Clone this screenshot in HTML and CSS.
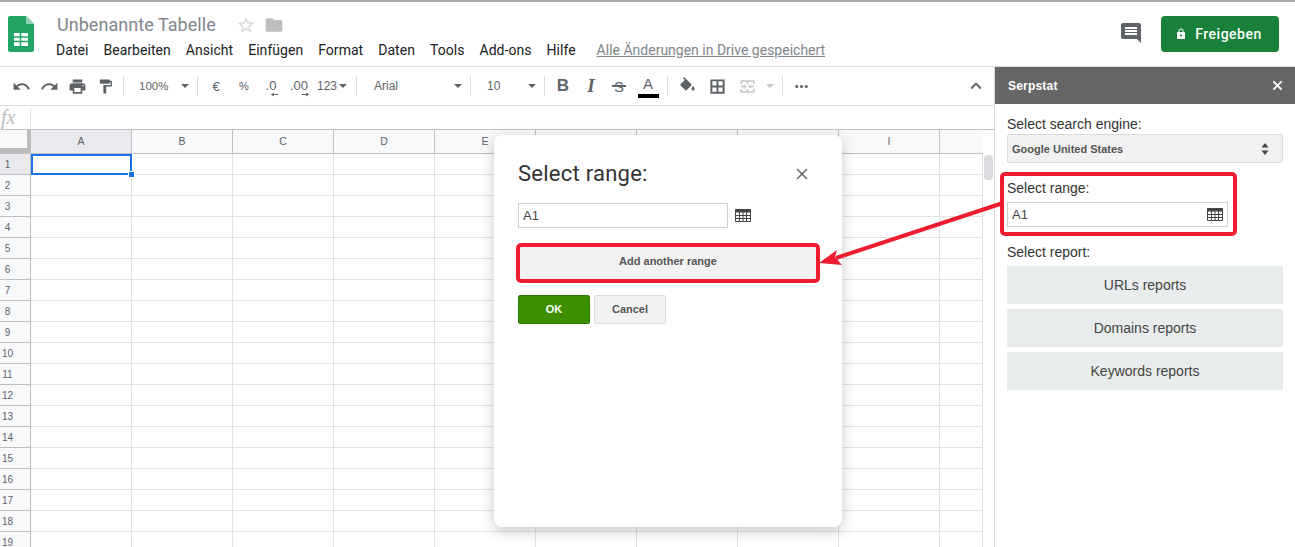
FILE: index.html
```html
<!DOCTYPE html>
<html lang="de">
<head>
<meta charset="utf-8">
<title>Unbenannte Tabelle</title>
<link rel="stylesheet" href="styles.css">
</head>
<body>
<svg class="defs" width="0" height="0">
  <symbol id="table" viewBox="0 0 16 13"><path d="M.5.5h15v12H.5z" fill="none" stroke="#444" stroke-width="1"/><path d="M.5.5h15v3H.5z" fill="#444"/><path d="M4.500 3v10M8 3v10M11.500 3v10M0 6.500h16M0 9.500h16" stroke="#444" stroke-width="1" fill="none"/></symbol>
</svg>
<div class="app">
  <header class="top">
    <svg class="logo" viewBox="0 0 26 36"><path d="M2 0h16l8 8v26a2 2 0 0 1-2 2H2a2 2 0 0 1-2-2V2a2 2 0 0 1 2-2z" fill="#23a566"/><path d="M18 0l8 8h-8z" fill="#8ed1b1"/><path d="M6 17h14v13H6z" fill="#fff"/><path d="M6 21h14M6 25.500h14M12.500 17v13" stroke="#23a566" stroke-width="1.500"/></svg>
    <div class="titles">
      <div class="title-row">
        <span class="doc-title">Unbenannte Tabelle</span>
        <svg class="star" viewBox="0 0 24 24"><path d="M22 9.240l-7.190-.62L12 2 9.190 8.630 2 9.240l5.460 4.730L5.820 21 12 17.270 18.180 21l-1.630-7.030L22 9.240zM12 15.400l-3.760 2.270 1-4.280-3.320-2.880 4.380-.38L12 6.100l1.710 4.040 4.380.38-3.320 2.880 1 4.280L12 15.400z"/></svg>
        <svg class="folder" viewBox="0 0 24 24"><path d="M10 4H4c-1.100 0-2 .9-2 2v12c0 1.100.9 2 2 2h16c1.100 0 2-.9 2-2V8c0-1.100-.9-2-2-2h-8l-2-2z"/></svg>
      </div>
      <nav class="menu">
        <span>Datei</span><span>Bearbeiten</span><span>Ansicht</span><span>Einfügen</span><span>Format</span><span>Daten</span><span>Tools</span><span>Add-ons</span><span>Hilfe</span>
        <a class="saved">Alle Änderungen in Drive gespeichert</a>
      </nav>
    </div>
    <svg class="comment" viewBox="0 0 24 24"><path d="M21.990 4c0-1.100-.89-2-1.990-2H4c-1.100 0-2 .9-2 2v12c0 1.100.9 2 2 2h14l4 4-.01-18zM18 14H6v-2h12v2zm0-3H6V9h12v2zm0-3H6V6h12v2z"/></svg>
    <button class="share"><svg viewBox="0 0 24 24"><path d="M18 8h-1V6c0-2.760-2.240-5-5-5S7 3.240 7 6v2H6c-1.100 0-2 .9-2 2v10c0 1.100.9 2 2 2h12c1.100 0 2-.9 2-2V10c0-1.100-.9-2-2-2zm-6 9c-1.100 0-2-.9-2-2s.9-2 2-2 2 .9 2 2-.9 2-2 2zm3.100-9H8.900V6c0-1.710 1.390-3.100 3.100-3.100 1.710 0 3.100 1.390 3.100 3.100v2z"/></svg>Freigeben</button>
  </header>
  <div class="main">
    <div class="work">
      <div class="toolbar">
        <span class="tb"><svg viewBox="0 0 24 24"><path d="M12.500 8c-2.650 0-5.050.99-6.900 2.600L2 7v9h9l-3.620-3.620c1.390-1.160 3.160-1.880 5.120-1.880 3.540 0 6.550 2.310 7.600 5.500l2.370-.78C21.080 11.030 17.150 8 12.500 8z"/></svg></span>
        <span class="tb"><svg viewBox="0 0 24 24"><path d="M18.400 10.600C16.550 8.990 14.150 8 11.500 8c-4.650 0-8.580 3.030-9.960 7.220L3.900 16c1.050-3.190 4.050-5.500 7.600-5.500 1.950 0 3.730.72 5.120 1.880L13 16h9V7l-3.600 3.600z"/></svg></span>
        <span class="tb"><svg viewBox="0 0 24 24"><path d="M19 8H5c-1.660 0-3 1.340-3 3v6h4v4h12v-4h4v-6c0-1.660-1.340-3-3-3zm-3 11H8v-5h8v5zm3-7c-.55 0-1-.45-1-1s.45-1 1-1 1 .45 1 1-.45 1-1 1zm-1-9H6v4h12V3z"/></svg></span>
        <span class="tb paint"><svg viewBox="0 0 24 24"><path d="M18 4V3c0-.55-.45-1-1-1H5c-.55 0-1 .45-1 1v4c0 .55.45 1 1 1h12c.55 0 1-.45 1-1V6h1v4H9v11c0 .55.45 1 1 1h2c.55 0 1-.45 1-1v-9h8V4h-3z"/></svg></span>
        <i class="sep"></i>
        <span class="pick w-zoom">100%<b class="caret"></b></span>
        <i class="sep"></i>
        <span class="tb txt">€</span>
        <span class="tb txt small">%</span>
        <span class="dec w-dec0">.0<svg viewBox="0 0 10 5"><path d="M0 2.500L3.500 0v2H9v1H3.500v2z"/></svg></span>
        <span class="dec w-dec2">.00<svg class="right" viewBox="0 0 10 5"><path d="M10 2.500L6.500 0v2H1v1h5.500v2z"/></svg></span>
        <span class="pick w-num">123<b class="caret"></b></span>
        <i class="sep"></i>
        <span class="pick w-font">Arial<b class="caret"></b></span>
        <i class="sep"></i>
        <span class="pick w-size">10<b class="caret"></b></span>
        <i class="sep"></i>
        <span class="tb fmt bold">B</span>
        <span class="tb fmt ital">I</span>
        <span class="tb fmt strike">S</span>
        <span class="tb w30 fmt color">A</span>
        <i class="sep"></i>
        <span class="tb w30"><svg viewBox="0 0 24 24"><path d="M16.560 8.940L7.620 0 6.210 1.410l2.380 2.380-5.150 5.150c-.59.59-.59 1.540 0 2.120l5.500 5.500c.29.29.68.44 1.060.44s.77-.15 1.060-.44l5.500-5.500c.59-.58.59-1.530 0-2.120zM19 11.500s-2 2.170-2 3.500c0 1.100.9 2 2 2s2-.9 2-2c0-1.330-2-3.500-2-3.500z"/></svg></span>
        <span class="tb w30"><svg viewBox="0 0 24 24"><path d="M3 3v18h18V3H3zm7.750 15.500H5.500v-5.250h5.250v5.250zm0-7.750H5.500V5.500h5.250v5.250zm7.750 7.750h-5.250v-5.250h5.250v5.250zm0-7.750h-5.250V5.500h5.250v5.250z"/></svg></span>
        <span class="tb w30 off"><svg viewBox="0 0 24 24"><path d="M3 4h18v2H3zM3 18h18v2H3zM3 6h2v3H3zM19 6h2v3h-2zM3 15h2v3H3zM19 15h2v3h-2zM11 4h2v5h-2zM11 15h2v5h-2zM4 11h4V9l3 3-3 3v-2H4zM20 11h-4V9l-3 3 3 3v-2h4z"/></svg></span>
        <span class="w-mcaret"><b class="caret off"></b></span>
        <i class="sep"></i>
        <span class="tb"><svg viewBox="0 0 24 24"><circle cx="6" cy="12" r="2"/><circle cx="12" cy="12" r="2"/><circle cx="18" cy="12" r="2"/></svg></span>
        <span class="tb collapse"><svg viewBox="0 0 24 24"><path d="M12 8l-6 6 1.410 1.410L12 10.830l4.590 4.580L18 14z"/></svg></span>
      </div>
      <div class="formula"><span class="fx">fx</span><i class="fsep"></i></div>
      <div class="sheet">
        <div class="heads">
          <div class="corner"></div>
          <div class="col active">A</div><div class="col">B</div><div class="col">C</div><div class="col">D</div><div class="col">E</div><div class="col">F</div><div class="col">G</div><div class="col">H</div><div class="col">I</div><div class="col last"></div>
        </div>
        <div class="body">
          <div class="rows">
            <div class="active">1</div><div>2</div><div>3</div><div>4</div><div>5</div><div>6</div><div>7</div><div>8</div><div>9</div><div>10</div><div>11</div><div>12</div><div>13</div><div>14</div><div>15</div><div>16</div><div>17</div><div>18</div><div>19</div>
          </div>
          <div class="cells"><div class="cursor"><i></i></div></div>
          <div class="vscroll"><i></i></div>
        </div>
      </div>
    </div>
    <aside class="panel">
      <div class="panel-head"><strong>Serpstat</strong><svg viewBox="0 0 12 12"><path d="M1.500 1.500l9 9M10.500 1.500l-9 9"/></svg></div>
      <div class="panel-body">
        <label class="lab">Select search engine:</label>
        <div class="select">Google United States<svg viewBox="0 0 8 12"><path d="M4 0l3.500 4.500h-7zM4 12L.5 7.500h7z"/></svg></div>
        <label class="lab lab-range">Select range:</label>
        <div class="range"><span>A1</span><svg><use href="#table"/></svg></div>
        <label class="lab lab-report">Select report:</label>
        <div class="reports"><div>URLs reports</div><div>Domains reports</div><div>Keywords reports</div></div>
      </div>
    </aside>
  </div>
  <section class="dialog">
    <div class="dlg-head"><h2>Select range:</h2><svg viewBox="0 0 12 12"><path d="M1 1l10 10M11 1L1 11"/></svg></div>
    <div class="dlg-input"><div class="field">A1</div><svg><use href="#table"/></svg></div>
    <button class="add">Add another range</button>
    <div class="actions"><button class="ok">OK</button><button class="cancel">Cancel</button></div>
  </section>
  <svg class="notes" viewBox="0 0 1295 547">
    <rect x="518" y="245" width="300" height="36" rx="3"/>
    <rect x="1002" y="174" width="233" height="60" rx="3"/>
    <path class="line" d="M1003 203L836 258"/>
    <path class="head" d="M819 263L837 250L835 257L842 265z"/>
  </svg>
</div>
</body>
</html>
```
FILE: styles.css
```css
* { box-sizing: border-box; }
html, body { margin: 0; padding: 0; height: 100%; overflow: hidden; background: #fff; }
body { font-family: "Liberation Sans", Arial, sans-serif; color: #333; }
.defs { position: absolute; }
.app { position: relative; width: 1295px; height: 547px; overflow: hidden; border-top: 2px solid #a9a9a9; display: flex; flex-direction: column; }

.top { height: 65px; flex: none; display: flex; align-items: flex-start; border-bottom: 1px solid #dadce0; }
.logo { width: 26px; height: 36px; margin: 14px 0 0 8px; flex: none; }
.titles { margin-left: 22px; flex: 1; }
.title-row { display: flex; align-items: center; height: 24px; margin-top: 11px; padding-left: 1px; }
.doc-title { font: 18px/24px Roboto, sans-serif; color: #80868b; letter-spacing: .05px; }
.star { width: 20px; height: 20px; margin-left: 20px; fill: #d4d6d9; }
.folder { width: 20px; height: 20px; margin-left: 8px; fill: #bdbdbd; }
.menu { display: flex; align-items: center; gap: 15px; height: 22px; margin-top: 2px; font: 14px/22px Roboto, sans-serif; letter-spacing: .04px; color: #202124; }
.saved { margin-left: 6px; color: #80868b; letter-spacing: 0; text-decoration: underline; }
.comment { width: 24px; height: 24px; margin: 19px 18px 0 0; fill: #5f6368; flex: none; }
.share { width: 118px; height: 36px; margin: 14px 16px 0 0; padding: 0 3px 0 0; flex: none; display: flex; align-items: center; justify-content: center; gap: 8px; border: 0; border-radius: 4px; background: #188038; color: #fff; font: 500 14px Roboto, sans-serif; letter-spacing: .5px; }
.share svg { width: 12px; height: 12px; fill: #fff; }

.main { flex: 1; display: flex; min-height: 0; }
.work { width: 995px; flex: none; display: flex; flex-direction: column; border-right: 1px solid #dadce0; }

.toolbar { height: 39px; flex: none; display: flex; align-items: center; padding: 0 4px 0 7px; border-bottom: 1px solid #dadce0; color: #5f6368; font-size: 12px; }
.tb { width: 28px; height: 26px; flex: none; display: flex; align-items: center; justify-content: center; }
.tb svg { width: 19px; height: 19px; fill: #5f6368; }
.tb.paint svg { width: 17px; height: 17px; }
.w30 { width: 30px; }
.sep { width: 1px; height: 20px; margin: 0 4px; background: #dadce0; flex: none; }
.txt { font-size: 13px; }
.small { font-size: 11px; }
.pick { position: relative; height: 26px; flex: none; display: flex; align-items: center; }
.w-zoom { width: 65px; padding-left: 11px; font-size: 11.5px; }
.w-num { width: 38px; padding-left: 3px; }
.w-font { width: 105px; padding-left: 13px; }
.w-size { width: 65px; padding-left: 12px; }
.caret { display: block; width: 0; height: 0; border: 4px solid transparent; border-top-color: #5f6368; border-bottom: 0; }
.pick .caret { position: absolute; right: 4px; top: 11px; }
.w-num .caret { right: 5px; }
.caret.off { border-top-color: #c4c7ca; }
.w-mcaret { width: 16px; flex: none; display: flex; justify-content: center; }
.dec { height: 26px; flex: none; display: flex; flex-direction: column; align-items: center; justify-content: flex-start; padding-top: 6px; font-size: 13px; line-height: 13px; }
.dec svg { width: 8px; height: 5px; fill: #5f6368; margin: 0 0 0 8px; flex: none; }
.w-dec0 { width: 26px; }
.w-dec2 { width: 30px; }
.dec .right { margin: 0 0 0 12px; }
.fmt { font-size: 16px; position: relative; }
.bold { font-weight: 700; font-size: 17px; }
.ital { font-family: "Liberation Serif", serif; font-style: italic; font-weight: 700; font-size: 19px; }
.strike { font-size: 15px; }
.strike::after { content: ""; position: absolute; left: 7px; right: 7px; top: 12px; height: 2px; background: #5f6368; }
.color { font-size: 15px; padding-bottom: 5px; }
.color::after { content: ""; position: absolute; left: 5px; right: 4px; bottom: 1px; height: 4px; background: #000; }
.off svg { fill: #c4c7ca; }
.collapse { margin-left: auto; }
.collapse svg { width: 22px; height: 22px; }

.formula { height: 24px; flex: none; display: flex; align-items: center; border-bottom: 1px solid #c0c0c0; }
.fx { width: 30px; padding-left: 1px; font: italic 20px "Liberation Serif", serif; color: #bdbdbd; }
.fsep { width: 1px; height: 17px; background: #dadce0; }

.sheet { flex: 1; min-height: 0; display: flex; flex-direction: column; overflow: hidden; }
.heads { height: 24px; flex: none; display: flex; background: #f8f9fa; border-bottom: 1px solid #c0c0c0; margin-right: 11px; }
.corner { width: 31px; flex: none; background: #bdbdbd; padding: 0; position: relative; border-right: 1px solid #bdbdbd; }
.corner::before { content: ""; position: absolute; left: 0; top: 0; width: 27px; height: 18px; background: #f8f9fa; }
.col { width: 101px; flex: none; border-right: 1px solid #c0c0c0; text-align: center; font-size: 10.5px; line-height: 23px; color: #5f6368; }
.col.active { background: #e8eaed; }
.col.last { width: 42px; border-right: 0; }
.body { flex: 1; min-height: 0; display: flex; }
.rows { width: 31px; flex: none; background: #f8f9fa; border-right: 1px solid #c0c0c0; font-size: 10px; color: #5f6368; }
.rows div { height: 21px; padding-right: 15px; text-align: center; line-height: 22px; border-bottom: 1px solid #c0c0c0; }
.rows .active { background: #e8eaed; }
.cells { position: relative; width: 952px; flex: none; background-image: linear-gradient(to right, transparent 100px, #e2e2e2 100px), linear-gradient(to bottom, transparent 20px, #e2e2e2 20px); background-size: 101px 21px; border-right: 1px solid #e2e2e2; }
.cursor { position: absolute; left: 0; top: 0; width: 101px; height: 21px; border: 2px solid #1a73e8; }
.cursor i { position: absolute; right: -5px; bottom: -5px; width: 7px; height: 7px; background: #1a73e8; border: 1px solid #fff; }
.vscroll { flex: 1; position: relative; }
.vscroll i { display: block; width: 9px; height: 25px; margin: 1px 0 0 1px; background: #dadce0; border-radius: 4px; }

.panel { flex: 1; min-width: 0; }
.panel-head { height: 37px; margin-top: 0; background: #666; display: flex; align-items: center; justify-content: space-between; padding: 0 12px 0 13px; color: #fff; font-size: 12px; letter-spacing: .2px; }
.panel-head svg { width: 11px; height: 11px; fill: none; stroke: #fff; stroke-width: 2; }
.panel-body { padding: 12px 12px 0; }
.lab { display: block; font-size: 14px; line-height: 16px; color: #333; }
.select { height: 29px; margin-top: 2px; display: flex; align-items: center; justify-content: space-between; padding: 0 13px 0 4px; background: #f1f1f1; border: 1px solid #dcdcdc; border-radius: 2px; font-size: 11px; font-weight: 700; color: #555; }
.select svg { width: 8px; height: 12px; fill: #444; }
.lab-range { margin-top: 17px; }
.range { width: 221px; height: 25px; margin-top: 6px; display: flex; align-items: center; justify-content: space-between; padding: 0 4px; border: 1px solid #d0d0d0; font-size: 13px; color: #444; }
.range svg, .dlg-input svg { width: 16px; height: 13px; }
.lab-report { margin-top: 17px; }
.reports { margin-top: 6px; display: flex; flex-direction: column; gap: 5px; }
.reports div { height: 38px; background: #e8ecec; text-align: center; font-size: 14px; line-height: 38px; color: #444; }

.dialog { position: absolute; left: 494px; top: 133px; width: 348px; height: 392px; padding: 0 24px; background: #fff; border-radius: 8px; box-shadow: 0 4px 14px rgba(0,0,0,.22); }
.dlg-head { display: flex; align-items: center; justify-content: space-between; height: 38px; margin-top: 19px; padding-right: 10px; }
.dlg-head h2 { margin: 0; font: 400 22px Roboto, sans-serif; letter-spacing: .25px; color: #333; }
.dlg-head svg { width: 12px; height: 12px; margin-top: 2px; fill: none; stroke: #666; stroke-width: 1.500; }
.dlg-input { display: flex; align-items: center; gap: 7px; margin-top: 11px; }
.field { width: 210px; height: 25px; padding: 0 4px; border: 1px solid #d0d0d0; font-size: 13px; line-height: 23px; color: #444; }
.add { display: block; width: 300px; height: 36px; margin-top: 17px; padding: 0 0 4px; border: 0; background: #f2f2f2; font: 700 11px "Liberation Sans", sans-serif; color: #555; }
.actions { display: flex; gap: 4px; margin-top: 14px; }
.actions button { width: 72px; height: 29px; padding: 0 0 2px; border-radius: 2px; font: 700 11px "Liberation Sans", sans-serif; }
.ok { background: #3d8f00; border: 1px solid #2d7a00; color: #fff; }
.cancel { background: #f2f2f2; border: 1px solid #dcdcdc; color: #555; }

.notes { position: absolute; left: 0; top: -2px; width: 1295px; height: 547px; pointer-events: none; }
.notes rect { fill: none; stroke: #ed1c2e; stroke-width: 4; }
.notes .line { stroke: #ed1c2e; stroke-width: 4; fill: none; }
.notes .head { fill: #ed1c2e; }
```
